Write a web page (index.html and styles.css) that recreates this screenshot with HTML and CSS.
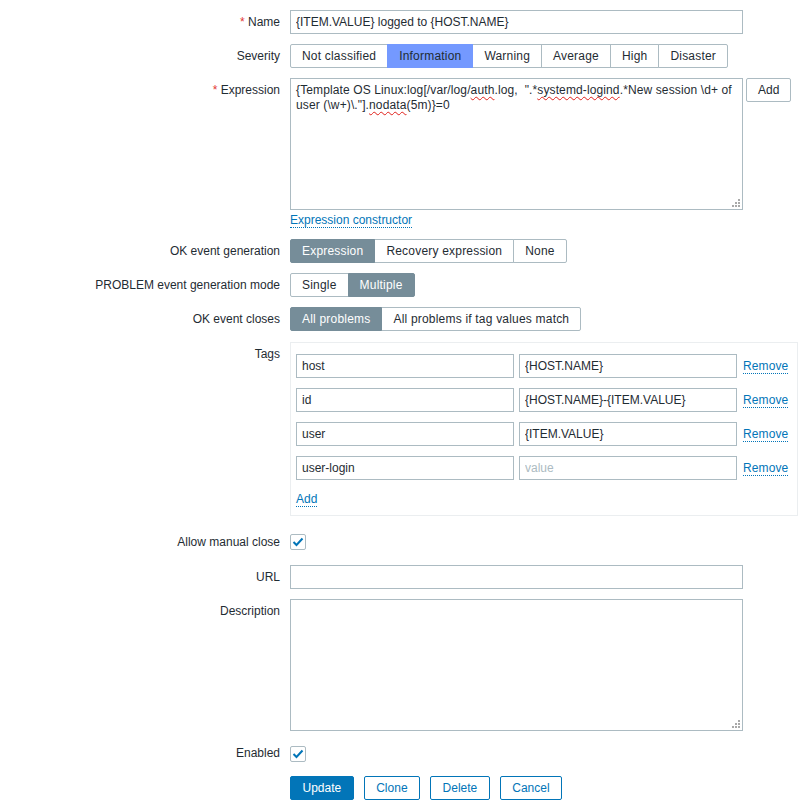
FILE: index.html
```html
<!DOCTYPE html>
<html lang="en">
<head>
    <meta charset="UTF-8">
    <title>Trigger</title>
    <link rel="stylesheet" href="styles.css">
</head>
<body>
    <form class="trigger-form">
        <div class="form-row">
            <label class="form-label"><span class="required">*</span> Name</label>
            <div class="form-field">
                <input class="text-input" type="text" value="{ITEM.VALUE} logged to {HOST.NAME}">
            </div>
        </div>

        <div class="form-row">
            <label class="form-label">Severity</label>
            <div class="form-field">
                <div class="radio-list">
                    <span>Not classified</span>
                    <span class="selected-info">Information</span>
                    <span>Warning</span>
                    <span>Average</span>
                    <span>High</span>
                    <span>Disaster</span>
                </div>
            </div>
        </div>

        <div class="form-row">
            <label class="form-label"><span class="required">*</span> Expression</label>
            <div class="form-field">
                <div class="expression-line">
                    <div class="textarea expression">{Template OS Linux:log[/var/log/<span class="spell">auth</span>.log,&nbsp; ".*<span class="spell">systemd-logind</span>.*New session \d+ of user (\w+)\."].<span class="spell">nodata</span>(5m)}=0<span class="grip"></span></div>
                    <button type="button" class="btn-grey">Add</button>
                </div>
                <div class="link-line"><a class="link" href="#">Expression constructor</a></div>
            </div>
        </div>

        <div class="form-row">
            <label class="form-label">OK event generation</label>
            <div class="form-field">
                <div class="radio-list">
                    <span class="selected">Expression</span>
                    <span>Recovery expression</span>
                    <span>None</span>
                </div>
            </div>
        </div>

        <div class="form-row">
            <label class="form-label">PROBLEM event generation mode</label>
            <div class="form-field">
                <div class="radio-list">
                    <span>Single</span>
                    <span class="selected">Multiple</span>
                </div>
            </div>
        </div>

        <div class="form-row">
            <label class="form-label">OK event closes</label>
            <div class="form-field">
                <div class="radio-list">
                    <span class="selected">All problems</span>
                    <span>All problems if tag values match</span>
                </div>
            </div>
        </div>

        <div class="form-row tags-row">
            <label class="form-label">Tags</label>
            <div class="form-field">
                <div class="tags-box">
                    <div class="tag-row">
                        <input class="text-input tag-input" type="text" value="host">
                        <input class="text-input tag-input" type="text" value="{HOST.NAME}">
                        <a class="link remove" href="#">Remove</a>
                    </div>
                    <div class="tag-row">
                        <input class="text-input tag-input" type="text" value="id">
                        <input class="text-input tag-input" type="text" value="{HOST.NAME}-{ITEM.VALUE}">
                        <a class="link remove" href="#">Remove</a>
                    </div>
                    <div class="tag-row">
                        <input class="text-input tag-input" type="text" value="user">
                        <input class="text-input tag-input" type="text" value="{ITEM.VALUE}">
                        <a class="link remove" href="#">Remove</a>
                    </div>
                    <div class="tag-row">
                        <input class="text-input tag-input" type="text" value="user-login">
                        <input class="text-input tag-input" type="text" placeholder="value">
                        <a class="link remove" href="#">Remove</a>
                    </div>
                    <div class="add-line"><a class="link" href="#">Add</a></div>
                </div>
            </div>
        </div>

        <div class="form-row check-row first-check">
            <label class="form-label">Allow manual close</label>
            <div class="form-field">
                <span class="checkbox">
                    <svg width="12" height="10" viewBox="0 0 12 10"><polyline points="1.5,5 4.5,8 10.5,1.5" fill="none" stroke="#0275b8" stroke-width="2"/></svg>
                </span>
            </div>
        </div>

        <div class="form-row">
            <label class="form-label">URL</label>
            <div class="form-field">
                <input class="text-input" type="text" value="">
            </div>
        </div>

        <div class="form-row">
            <label class="form-label">Description</label>
            <div class="form-field">
                <div class="textarea"><span class="grip"></span></div>
            </div>
        </div>

        <div class="form-row check-row">
            <label class="form-label">Enabled</label>
            <div class="form-field">
                <span class="checkbox">
                    <svg width="12" height="10" viewBox="0 0 12 10"><polyline points="1.5,5 4.5,8 10.5,1.5" fill="none" stroke="#0275b8" stroke-width="2"/></svg>
                </span>
            </div>
        </div>

        <div class="form-row">
            <div></div>
            <div class="form-field buttons">
                <button type="button" class="btn-primary">Update</button>
                <button type="button" class="btn-alt">Clone</button>
                <button type="button" class="btn-alt">Delete</button>
                <button type="button" class="btn-alt">Cancel</button>
            </div>
        </div>
    </form>
</body>
</html>
```

FILE: styles.css
```css
* {
    margin: 0;
    padding: 0;
    box-sizing: border-box;
}

body {
    font-family: 'Liberation Sans', Arial, sans-serif;
    font-size: 12px;
    color: #1f2c33;
    background-color: #fff;
}

.trigger-form {
    padding-top: 10px;
}

.form-row {
    display: grid;
    grid-template-columns: 280px 1fr;
    column-gap: 10px;
    margin-bottom: 10px;
}

.form-label {
    text-align: right;
    line-height: 24px;
}

.required {
    color: #e33734;
}

.text-input {
    display: block;
    width: 453px;
    height: 24px;
    border: 1px solid #acbbc2;
    padding: 0 5px;
    font: inherit;
    color: inherit;
    background-color: #fff;
    outline: none;
}

.text-input::placeholder {
    color: #acbbc2;
}

/* segmented radio buttons */
.radio-list {
    display: flex;
    height: 24px;
    letter-spacing: 0.2px;
}

.radio-list span {
    position: relative;
    border: 1px solid #acbbc2;
    margin-left: -1px;
    padding: 0 11px;
    line-height: 22px;
    white-space: nowrap;
    background-color: #fff;
}

.radio-list span:first-child {
    margin-left: 0;
    border-radius: 2px 0 0 2px;
}

.radio-list span:last-child {
    border-radius: 0 2px 2px 0;
}

.radio-list .selected {
    background-color: #768d99;
    border-color: #768d99;
    color: #fff;
    z-index: 1;
}

.radio-list .selected-info {
    background-color: #7499ff;
    border-color: #7499ff;
    z-index: 1;
}

/* expression */
.expression-line {
    display: flex;
    align-items: flex-start;
    gap: 3px;
}

.textarea {
    position: relative;
    width: 453px;
    height: 132px;
    border: 1px solid #acbbc2;
    padding: 4px 5px;
    line-height: 15px;
}

.expression {
    letter-spacing: 0.12px;
}

.spell {
    text-decoration: underline wavy #e0201a;
    text-decoration-thickness: 1px;
    text-underline-offset: 2px;
}

.grip {
    position: absolute;
    right: 2px;
    bottom: 2px;
    width: 8px;
    height: 8px;
    background:
        linear-gradient(#a9a9a9, #a9a9a9) 6px 0 / 2px 2px no-repeat,
        linear-gradient(#a9a9a9, #a9a9a9) 3px 3px / 2px 2px no-repeat,
        linear-gradient(#a9a9a9, #a9a9a9) 6px 3px / 2px 2px no-repeat,
        linear-gradient(#a9a9a9, #a9a9a9) 0 6px / 2px 2px no-repeat,
        linear-gradient(#a9a9a9, #a9a9a9) 3px 6px / 2px 2px no-repeat,
        linear-gradient(#a9a9a9, #a9a9a9) 6px 6px / 2px 2px no-repeat;
}

.link-line {
    line-height: 18px;
    padding-top: 1px;
}

.link {
    color: #0275b8;
    text-decoration: none;
    border-bottom: 1px dotted #0275b8;
}

/* buttons */
button {
    height: 24px;
    padding: 0 11.5px;
    font: inherit;
    border-radius: 2px;
    cursor: pointer;
}

.btn-grey {
    padding: 0 11px;
    background-color: #fff;
    color: #1f2c33;
    border: 1px solid #acbbc2;
}

.btn-primary {
    background-color: #0275b8;
    border: 1px solid #0275b8;
    color: #fff;
}

.btn-alt {
    background-color: #fff;
    border: 1px solid #0275b8;
    color: #0275b8;
}

.buttons {
    display: flex;
    gap: 10px;
}

/* tags */
.tags-row {
    margin-top: 11px;
}

.tags-box {
    width: 508px;
    border: 1px solid #ebeef0;
    padding: 11px 5px 7px;
}

.tag-row {
    display: flex;
    align-items: center;
    gap: 5px;
    margin-bottom: 10px;
}

.tag-row .tag-input {
    width: 218px;
    flex-shrink: 0;
}

.remove {
    margin-left: 1px;
    letter-spacing: 0.1px;
}

.add-line {
    line-height: 18px;
}

/* checkboxes */
.check-row {
    min-height: 25px;
}

.first-check {
    min-height: 29px;
}

.first-check .form-label {
    padding-top: 4px;
}

.checkbox {
    display: flex;
    align-items: center;
    justify-content: center;
    width: 16px;
    height: 16px;
    margin-top: 5px;
    border: 1px solid #acbbc2;
    border-radius: 2px;
}

.first-check .checkbox {
    margin-top: 8px;
}
```
